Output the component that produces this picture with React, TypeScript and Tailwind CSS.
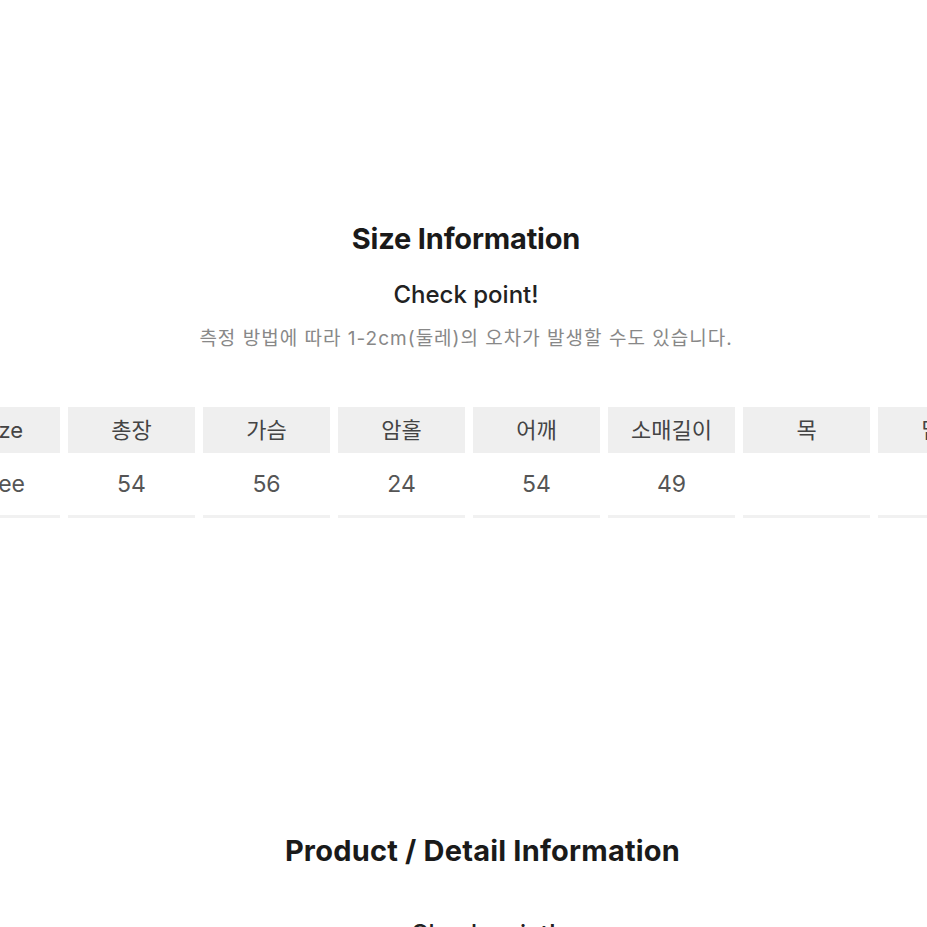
const headers = ["Size", "총장", "가슴", "암홀", "어깨", "소매길이", "목", "밑단"];
const values = ["Free", "54", "56", "24", "54", "49", "", ""];

function SizeTable() {
    return (
        <div className="w-full overflow-hidden">
            <div className="flex gap-x-2 ml-[-58px] w-max">
                {headers.map((h, i) => (
                    <div key={h} className={["flex flex-col shrink-0", i === 0 ? "w-[118px]" : "w-[127px]"].join(" ")}>
                        <div className="h-[46px] bg-[#efefef] flex items-center justify-center text-[22px] text-[#444]">
                            {h}
                        </div>
                        <div className="h-[62px] flex items-center justify-center text-[23px] text-[#555]">
                            {values[i]}
                        </div>
                        <div className="h-[3px] bg-[#f1f1f1]"></div>
                    </div>
                ))}
            </div>
        </div>
    );
}

export default function App() {
    return (
        <div
            className="w-[927px] h-[927px] bg-white overflow-hidden flex flex-col items-center"
            style={{ fontFamily: "Inter, 'Noto Sans CJK KR', sans-serif" }}
        >
            <h1 className="mt-[221px] ml-[5px] h-[36px] leading-[36px] text-[29px] font-bold text-[#1a1a1a] tracking-[-0.2px]">
                Size Information
            </h1>
            <p className="mt-[22px] ml-[5px] h-[32px] leading-[32px] text-[24px] font-medium text-[#222]">
                Check point!
            </p>
            <p className="mt-[16px] ml-[5px] h-[24px] leading-[24px] text-[19px] text-[#888] tracking-[1px]">
                측정 방법에 따라 1-2cm(둘레)의 오차가 발생할 수도 있습니다.
            </p>
            <div className="mt-[56px] w-full">
                <SizeTable />
            </div>
            <h2 className="mt-[315px] ml-[38px] h-[36px] leading-[36px] text-[29px] font-bold text-[#1a1a1a] tracking-[0.2px]">
                Product / Detail Information
            </h2>
            <p className="mt-[49px] ml-[40px] h-[32px] leading-[32px] text-[24px] font-medium text-[#222]">
                Check point!
            </p>
        </div>
    );
}
